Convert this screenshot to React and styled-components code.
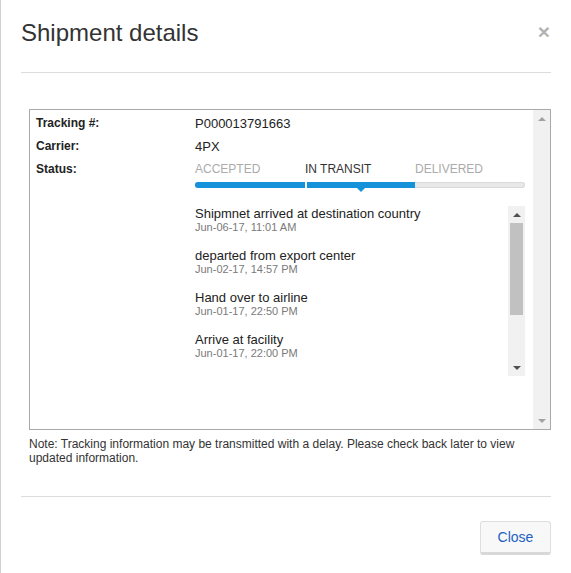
import React from 'react'
import styled, { createGlobalStyle } from 'styled-components'

const GlobalStyle = createGlobalStyle`
  html, body {
    margin: 0;
    padding: 0;
    background: #fff;
  }
  body {
    font-family: "Liberation Sans", Arial, sans-serif;
    color: #333;
  }
`

const steps = ['Accepted', 'In transit', 'Delivered']
const currentStep = 1

const events = [
  { title: 'Shipmnet arrived at destination country', date: 'Jun-06-17, 11:01 AM' },
  { title: 'departed from export center', date: 'Jun-02-17, 14:57 PM' },
  { title: 'Hand over to airline', date: 'Jun-01-17, 22:50 PM' },
  { title: 'Arrive at facility', date: 'Jun-01-17, 22:00 PM' },
]

const Dialog = styled.div`
  box-sizing: border-box;
  width: 571px;
  min-height: 573px;
  border-left: 1px solid #d2d2d2;
  padding: 0 20px;
  background: #fff;
`

const Header = styled.div`
  display: flex;
  justify-content: space-between;
  align-items: flex-start;
  padding: 19px 0 26px;
  border-bottom: 1px solid #dcdcdc;
`

const Title = styled.h2`
  margin: 0;
  font-size: 24px;
  font-weight: normal;
  line-height: 27px;
  color: #333;
`

const CloseX = styled.button`
  border: 0;
  background: none;
  padding: 0;
  margin: 2px 1px 0 0;
  font-family: "Liberation Sans", Arial, sans-serif;
  font-size: 21px;
  font-weight: bold;
  line-height: 1;
  color: #b3b3b3;
  cursor: pointer;
`

const Body = styled.div`
  padding: 36px 0 31px 8px;
`

const InfoBox = styled.div`
  box-sizing: border-box;
  display: flex;
  height: 321px;
  border: 1px solid #a9a9a9;
`

const InfoContent = styled.div`
  flex: 1;
  min-width: 0;
  padding: 2px 8px 0 6px;
  overflow: hidden;
`

const DetailGrid = styled.div`
  display: grid;
  grid-template-columns: 159px 1fr;
  align-items: start;
`

const Label = styled.div`
  font-size: 12px;
  font-weight: bold;
  line-height: 23px;
  color: #222;
`

const Value = styled.div`
  font-size: 13px;
  line-height: 23px;
  color: #222;
`

const Steps = styled.div`
  display: grid;
  grid-template-columns: repeat(3, 1fr);
`

const StepLabel = styled.div`
  font-size: 12px;
  line-height: 23px;
  text-transform: uppercase;
  color: ${p => (p.$current ? '#333' : '#ababab')};
`

const Track = styled.div`
  display: grid;
  grid-template-columns: repeat(3, 1fr);
  height: 6px;
  margin-top: 1px;
  border-radius: 3px;
  background: #e8e8e8;
  box-shadow: inset 0 0 0 1px #dadada;
`

const Segment = styled.div`
  position: relative;
  background: ${p => (p.$done ? '#1592d9' : 'transparent')};
  border-left: ${p => (p.$split ? '2px solid #fff' : '0')};
  border-radius: ${p => (p.$first ? '3px 0 0 3px' : '0')};
`

const Pointer = styled.span`
  position: absolute;
  left: 50%;
  bottom: -4px;
  margin-left: -5px;
  width: 0;
  height: 0;
  border-left: 5px solid transparent;
  border-right: 5px solid transparent;
  border-top: 5px solid #1592d9;
`

const EventsBox = styled.div`
  display: flex;
  height: 170px;
  margin-top: 18px;
`

const EventList = styled.div`
  flex: 1;
  overflow: hidden;
`

const Event = styled.div`
  margin-bottom: 14px;
`

const EventTitle = styled.div`
  font-size: 13px;
  line-height: 15px;
  color: #222;
`

const EventDate = styled.div`
  font-size: 11px;
  line-height: 13px;
  color: #7a7a7a;
`

const ScrollTrack = styled.div`
  display: flex;
  flex-direction: column;
  width: 17px;
  flex: none;
  background: #f1f1f1;
`

const ArrowCell = styled.div`
  display: flex;
  align-items: center;
  justify-content: center;
  height: 17px;
  flex: none;
`

const Arrow = styled.span`
  width: 0;
  height: 0;
  border-left: 4px solid transparent;
  border-right: 4px solid transparent;
  ${p =>
    p.$down
      ? `border-top: 4px solid ${p.$color};`
      : `border-bottom: 4px solid ${p.$color};`}
`

const ThumbArea = styled.div`
  flex: 1;
  padding: 0 2px;
`

const Thumb = styled.div`
  height: 92px;
  background: #c1c1c1;
`

const Note = styled.p`
  margin: 7px 0 0;
  font-size: 12px;
  line-height: 14px;
  color: #333;
`

const Footer = styled.div`
  display: flex;
  justify-content: flex-end;
  padding-top: 24px;
  border-top: 1px solid #dcdcdc;
`

const Button = styled.button`
  box-sizing: border-box;
  width: 71px;
  height: 34px;
  padding: 0 0 1px;
  border: 1px solid #dedede;
  border-bottom: 3px solid #d8d8d8;
  border-radius: 3px;
  background: #f8f8f8;
  font-family: "Liberation Sans", Arial, sans-serif;
  font-size: 14px;
  color: #2160c3;
  cursor: pointer;
`

function Scrollbar({ active }) {
  const color = active ? '#505050' : '#a3a3a3'
  return (
    <ScrollTrack>
      <ArrowCell>
        <Arrow $color={color} />
      </ArrowCell>
      <ThumbArea>{active && <Thumb />}</ThumbArea>
      <ArrowCell>
        <Arrow $down $color={color} />
      </ArrowCell>
    </ScrollTrack>
  )
}

function StatusTracker() {
  return (
    <div>
      <Steps>
        {steps.map((s, i) => (
          <StepLabel key={s} $current={i === currentStep}>
            {s}
          </StepLabel>
        ))}
      </Steps>
      <Track>
        {steps.map((s, i) => (
          <Segment
            key={s}
            $done={i <= currentStep}
            $first={i === 0}
            $split={i > 0 && i <= currentStep}
          >
            {i === currentStep && <Pointer />}
          </Segment>
        ))}
      </Track>
      <EventsBox>
        <EventList>
          {events.map(e => (
            <Event key={e.title}>
              <EventTitle>{e.title}</EventTitle>
              <EventDate>{e.date}</EventDate>
            </Event>
          ))}
        </EventList>
        <Scrollbar active />
      </EventsBox>
    </div>
  )
}

export default function App() {
  return (
    <>
      <GlobalStyle />
      <Dialog>
        <Header>
          <Title>Shipment details</Title>
          <CloseX aria-label="Close">×</CloseX>
        </Header>
        <Body>
          <InfoBox>
            <InfoContent>
              <DetailGrid>
                <Label>Tracking #:</Label>
                <Value>P000013791663</Value>
                <Label>Carrier:</Label>
                <Value>4PX</Value>
                <Label>Status:</Label>
                <StatusTracker />
              </DetailGrid>
            </InfoContent>
            <Scrollbar />
          </InfoBox>
          <Note>
            Note: Tracking information may be transmitted with a delay. Please check back later to view
            updated information.
          </Note>
        </Body>
        <Footer>
          <Button>Close</Button>
        </Footer>
      </Dialog>
    </>
  )
}
